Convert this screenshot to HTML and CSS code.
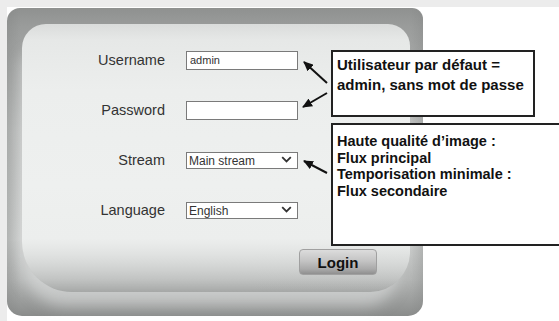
FILE: index.html
```html
<!DOCTYPE html>
<html lang="fr">
<head>
  <meta charset="UTF-8">
  <meta name="viewport" content="width=device-width, initial-scale=1.0">
  <title>Connexion caméra</title>
  <link rel="stylesheet" href="styles.css">
</head>
<body>
  <div class="page">
    <div class="panel">
      <div class="face">
        <form class="login">
          <label for="user">Username</label>
          <input type="text" id="user" value="admin">

          <label for="pass">Password</label>
          <input type="password" id="pass">

          <label for="stream">Stream</label>
          <span class="pick">
            <select id="stream">
              <option>Main stream</option>
              <option>Sub stream</option>
            </select>
            <svg class="chev" width="11" height="7" viewBox="0 0 11 7"><path d="M1.2 1.2 L5.5 5.5 L9.8 1.2" fill="none" stroke="#333" stroke-width="1.8"/></svg>
          </span>

          <label for="lang">Language</label>
          <span class="pick">
            <select id="lang">
              <option>English</option>
              <option>Français</option>
            </select>
            <svg class="chev" width="11" height="7" viewBox="0 0 11 7"><path d="M1.2 1.2 L5.5 5.5 L9.8 1.2" fill="none" stroke="#333" stroke-width="1.8"/></svg>
          </span>
        </form>
        <div class="actions">
          <button type="button" class="btn-login">Login</button>
        </div>
      </div>
    </div>

    <div class="note note-user">
      Utilisateur par défaut =<br>
      admin, sans mot de passe
    </div>
    <div class="note note-stream">
      Haute qualité d’image :<br>
      Flux principal<br>
      Temporisation minimale :<br>
      Flux secondaire
    </div>

    <svg class="arrows" width="552" height="314" viewBox="0 0 552 314">
      <defs>
        <marker id="head" markerUnits="userSpaceOnUse" markerWidth="10" markerHeight="9" refX="9" refY="4.5" orient="auto">
          <path d="M0 0 L10 4.5 L0 9 Z" fill="#111"/>
        </marker>
      </defs>
      <line x1="320" y1="76" x2="297" y2="55" stroke="#111" stroke-width="2" marker-end="url(#head)"/>
      <line x1="320" y1="86" x2="296" y2="100" stroke="#111" stroke-width="2" marker-end="url(#head)"/>
      <line x1="320" y1="166" x2="297" y2="154" stroke="#111" stroke-width="2" marker-end="url(#head)"/>
    </svg>
  </div>
</body>
</html>
```

FILE: styles.css
```css
body {
  margin: 0;
  background: #fff;
  font-family: 'Liberation Sans', Arial, sans-serif;
}
.page {
  position: relative;
  width: 559px;
  height: 321px;
  box-sizing: border-box;
  border-top: 7px solid #ececec;
  border-left: 7px solid #ececec;
  overflow: hidden;
}

/* cadre gris + face claire */
.panel {
  margin-top: 1px;
  width: 416px;
  height: 308px;
  box-sizing: border-box;
  padding: 16px 13px 24px 15px;
  border-radius: 13px 11px 15px 15px;
  background:
    linear-gradient(to right, rgba(128,130,129,0.35) 0, rgba(128,130,129,0) 14px),
    linear-gradient(to left, rgba(128,130,129,0.3) 0, rgba(128,130,129,0) 12px),
    linear-gradient(to bottom, #8f9190 0%, #9a9c9b 6%, #bfc1c0 40%, #cdcfce 75%, #b4b6b5 88%, #8a8c8b 100%);
}
.face {
  height: 100%;
  border-radius: 24px 22px 40px 50px;
  background: linear-gradient(to bottom, #dadcdb 0, #e6e8e7 6%, #eceeed 25%, #eef0ef 60%, #eceeed 80%, rgba(230,232,231,0) 100%);
  box-shadow: -6px 20px 14px -6px rgba(228,230,229,0.55);
}
.login {
  display: grid;
  grid-template-columns: 143px 112px;
  grid-auto-rows: 50px;
  column-gap: 21px;
  align-items: center;
  padding-top: 11px;
}
.login label {
  text-align: right;
  font-size: 14.5px;
  color: #333;
}
.login input, .pick select {
  box-sizing: border-box;
  width: 112px;
  margin: 0;
  font-family: 'Liberation Sans', Arial, sans-serif;
  font-size: 11px;
  color: #333;
  background: #fff;
  border: 1px solid #7a7a7a;
  border-radius: 0;
  outline: none;
}
.login input {
  height: 19px;
  padding: 0 3px;
}
.pick {
  position: relative;
  display: block;
}
.pick select {
  appearance: none;
  height: 17px;
  padding: 0 2px;
  font-size: 12px;
}
.chev {
  position: absolute;
  right: 6px;
  top: 5px;
}
.actions {
  padding: 14px 0 0 277px;
}
.btn-login {
  width: 78px;
  height: 26px;
  font-family: 'Liberation Sans', Arial, sans-serif;
  font-size: 15px;
  font-weight: bold;
  color: #111;
  border: 1px solid #a0a0a0;
  border-radius: 4px;
  background: linear-gradient(to bottom, #dcdcdc 0%, #c4c4c4 45%, #a9a9a9 80%, #8f8f8f 100%);
}
.note {
  position: absolute;
  left: 324px;
  box-sizing: border-box;
  background: #fff;
  border: 2px solid #222;
  color: #111;
  font-weight: bold;
}
.note-user {
  top: 43px;
  width: 204px;
  height: 67px;
  padding: 3px 0 0 4px;
  font-size: 15px;
  line-height: 20px;
}
.note-stream {
  top: 116px;
  width: 240px;
  height: 123px;
  padding: 8px 0 0 4px;
  font-size: 14.5px;
  line-height: 16.5px;
}
.arrows {
  position: absolute;
  left: 0;
  top: 0;
  pointer-events: none;
}
```
